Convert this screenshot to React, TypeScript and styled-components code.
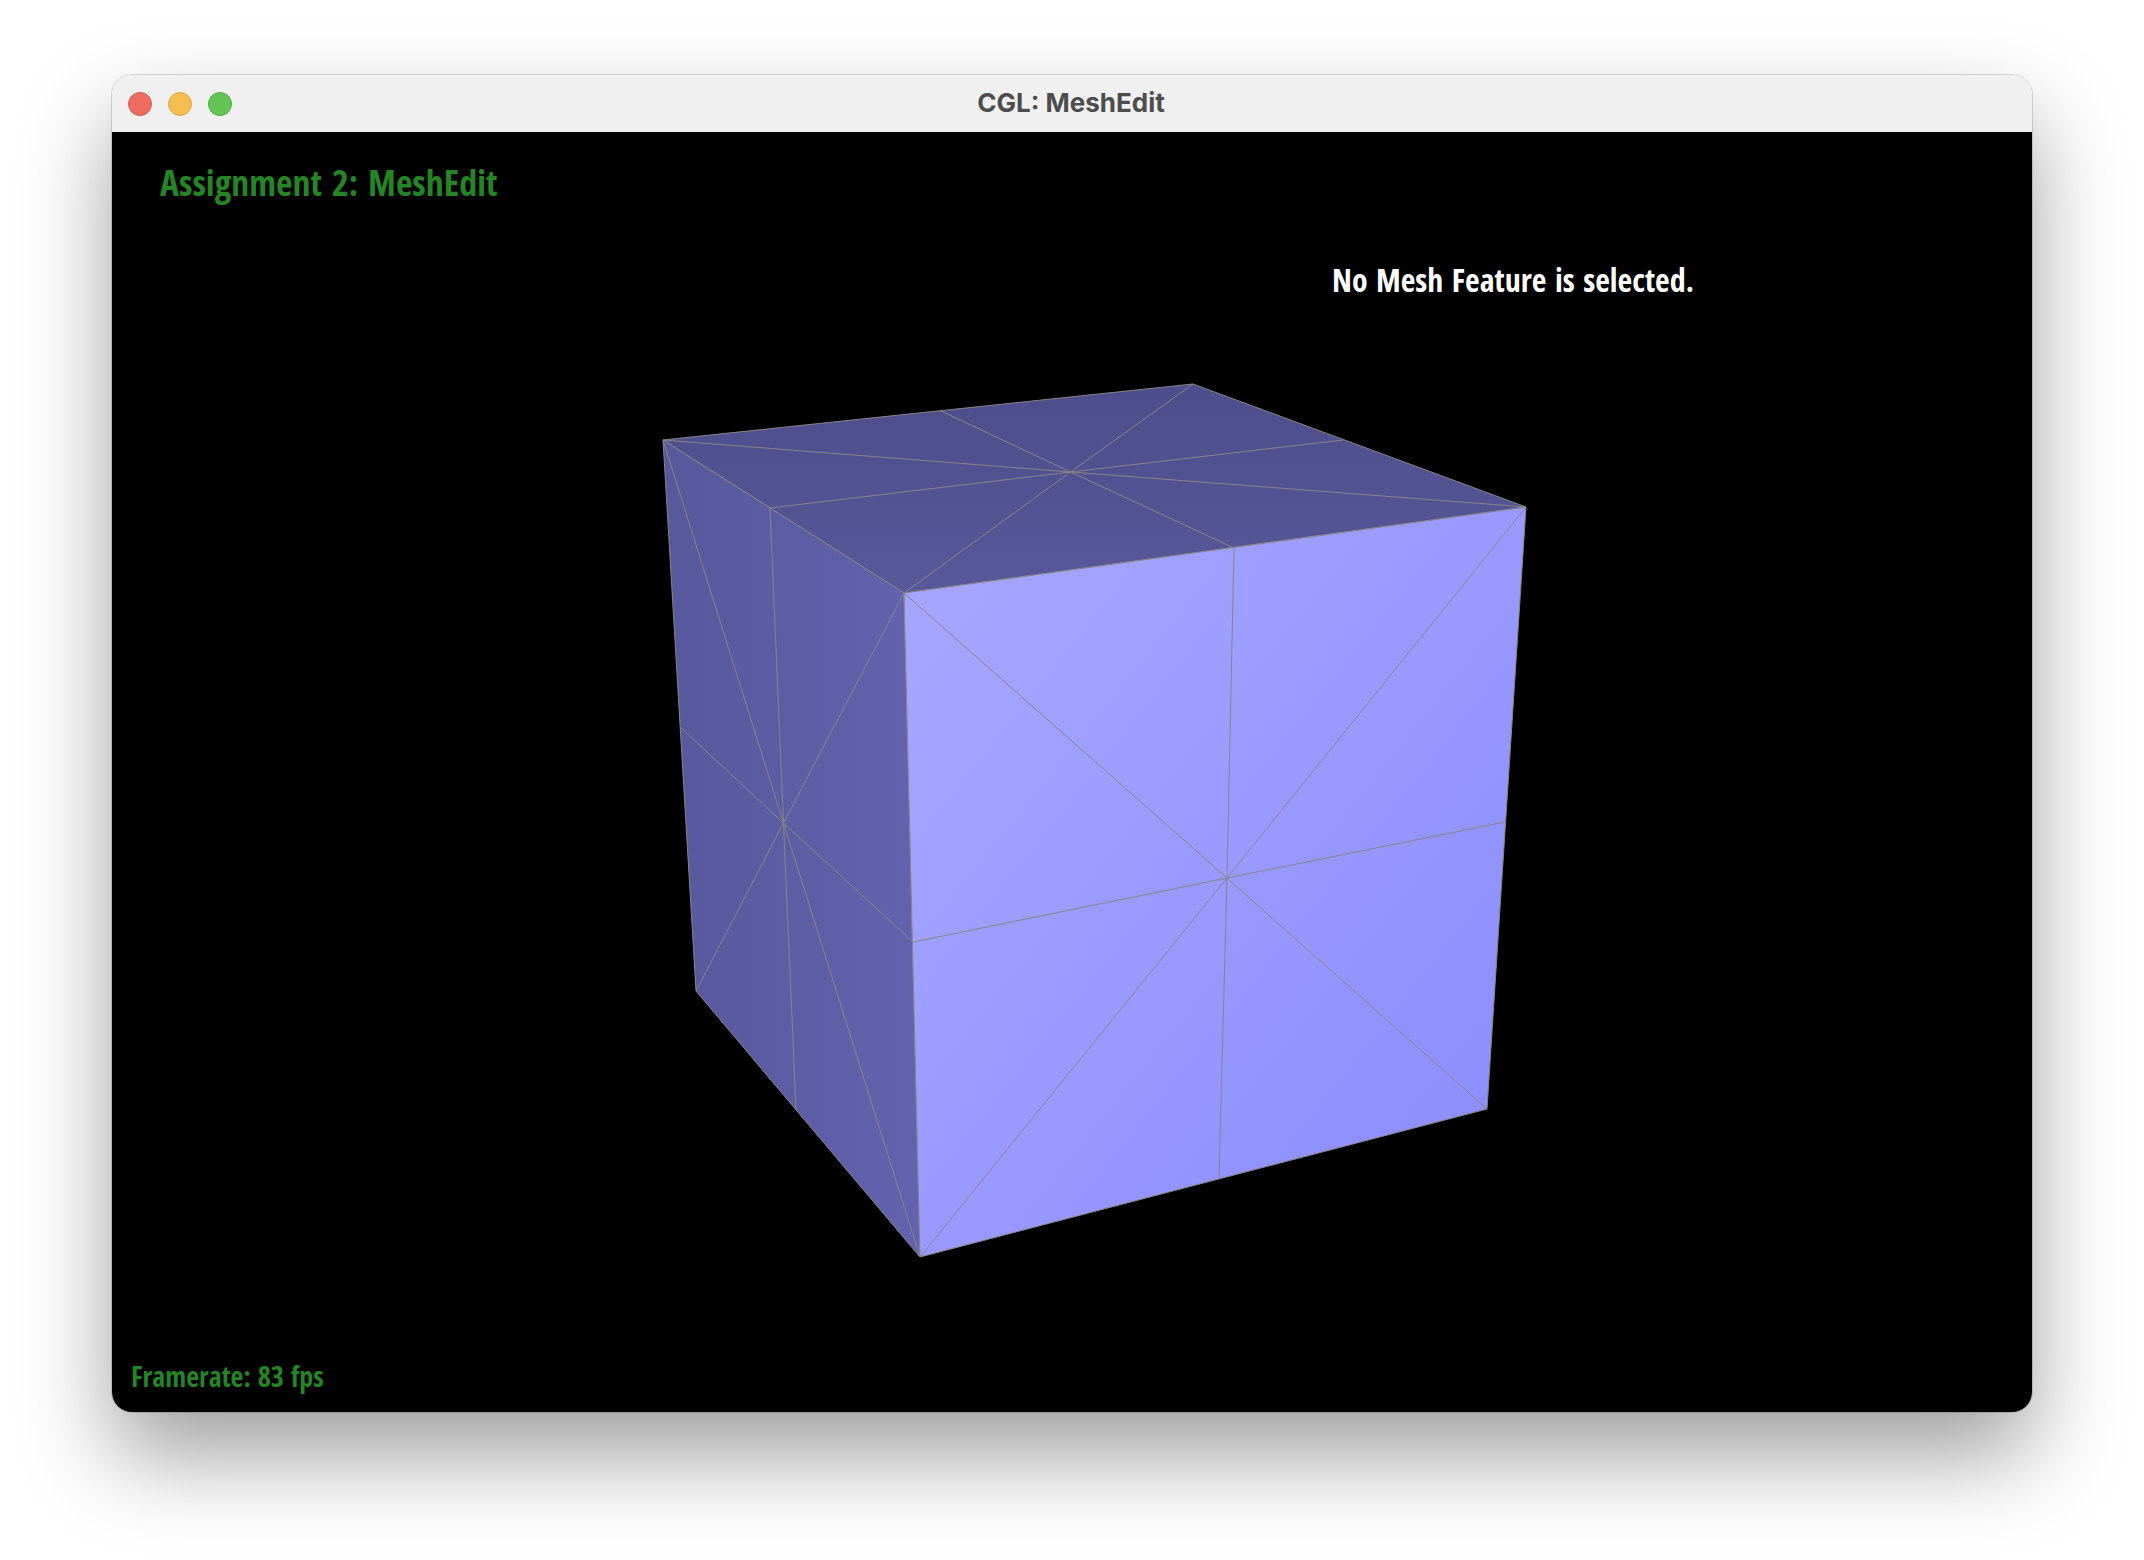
import styled, { createGlobalStyle } from "styled-components"

const GlobalStyle = createGlobalStyle`
    html, body {
        margin: 0;
        background: #ffffff;
    }
`

const Page = styled.div`
    width: 2144px;
    height: 1560px;
    box-sizing: border-box;
    padding: 75px 112px 0;
    overflow: hidden;
`

const Window = styled.div`
    width: 1920px;
    height: 1337px;
    display: flex;
    flex-direction: column;
    border-radius: 20px;
    overflow: hidden;
`

const WindowShadow = styled.div`
    border-radius: 20px;
    box-shadow: 0 44px 92px 0 rgba(0, 0, 0, 0.38), 0 0 0 1px rgba(0, 0, 0, 0.14);
`

const TitleBar = styled.div`
    height: 57px;
    flex: none;
    display: flex;
    align-items: center;
    position: relative;
    padding-left: 16px;
    gap: 16px;
    background: #f0f0f0;
`

const Light = styled.span<{ $fill: string; $edge: string }>`
    width: 24px;
    height: 24px;
    box-sizing: border-box;
    border-radius: 50%;
    background: ${p => p.$fill};
    border: 1px solid ${p => p.$edge};
`

const Title = styled.div`
    position: absolute;
    left: 0;
    right: 2px;
    top: 0;
    bottom: 2px;
    display: flex;
    align-items: center;
    justify-content: center;
    font-family: "Inter", "Liberation Sans", sans-serif;
    font-weight: 700;
    font-size: 26px;
    color: #4d4d4d;
`

const Viewport = styled.div`
    position: relative;
    height: 1280px;
    background: #000000;
`

const Cube = styled.svg`
    display: block;
`

const GlText = styled.div<{ $size: number; $color: string; $words: number }>`
    position: absolute;
    font-family: "Open Sans", "Noto Sans", sans-serif;
    font-stretch: condensed;
    font-weight: 700;
    font-size: ${p => p.$size}px;
    word-spacing: ${p => p.$words}px;
    line-height: 1;
    white-space: nowrap;
    color: ${p => p.$color};
`

const Heading = styled(GlText)`
    left: 48px;
    top: 33px;
`

const Selection = styled(GlText)`
    left: 1220px;
    top: 132px;
`

const Framerate = styled(GlText)`
    left: 19px;
    bottom: 22px;
`

type Pt = [number, number]

// window x = page x - 112, window y = page y - 132
const p = (x: number, y: number): Pt => [x - 112, y - 132]

const TBL = p(663, 440)
const APEX = p(1193, 384)
const TR = p(1526, 507)
const FTL = p(904, 593)
const LB = p(696, 991)
const BOT = p(920, 1257)
const BR = p(1487, 1109)

const faces: { fill: string; corners: Pt[]; rim: Pt[]; center: Pt }[] = [
    {
        fill: "url(#top)",
        corners: [TBL, APEX, TR, FTL],
        rim: [p(941, 411), p(1343, 440), p(1234, 548), p(770, 508)],
        center: p(1070.5, 472),
    },
    {
        fill: "url(#left)",
        corners: [TBL, FTL, BOT, LB],
        rim: [p(770, 508), p(913, 942), p(796, 1110), p(680, 727)],
        center: p(783.5, 823),
    },
    {
        fill: "url(#front)",
        corners: [FTL, TR, BR, BOT],
        rim: [p(1234, 548), p(1505, 822), p(1219, 1179), p(913, 942)],
        center: p(1227, 878),
    },
]

const MeshCube = () => (
    <Cube width="1920" height="1280" viewBox="0 0 1920 1280">
        <defs>
            <linearGradient id="top" gradientUnits="userSpaceOnUse" x1="800" y1="260" x2="800" y2="470">
                <stop offset="0" stopColor="#4e4e8c" />
                <stop offset="1" stopColor="#58589b" />
            </linearGradient>
            <linearGradient id="left" gradientUnits="userSpaceOnUse" x1="560" y1="0" x2="800" y2="0">
                <stop offset="0" stopColor="#58589d" />
                <stop offset="1" stopColor="#6262ae" />
            </linearGradient>
            <linearGradient id="front" gradientUnits="userSpaceOnUse" x1="800" y1="520" x2="1400" y2="1000">
                <stop offset="0" stopColor="#a5a5ff" />
                <stop offset="1" stopColor="#8d8dfd" />
            </linearGradient>
        </defs>
        {faces.map((face, i) => (
            <g key={i}>
                <polygon points={face.corners.map(c => c.join(",")).join(" ")} fill={face.fill} />
                {[...face.corners, ...face.rim].map((pt, j) => (
                    <line key={j} x1={pt[0]} y1={pt[1]} x2={face.center[0]} y2={face.center[1]} stroke="#868686" strokeWidth="1" />
                ))}
                <polygon points={face.corners.map(c => c.join(",")).join(" ")} fill="none" stroke="#868686" strokeWidth="1" />
            </g>
        ))}
    </Cube>
)

const App = () => (
    <>
        <GlobalStyle />
        <Page>
            <WindowShadow>
                <Window>
                    <TitleBar>
                        <Light $fill="#ef6b60" $edge="#dc5a50" />
                        <Light $fill="#f6be50" $edge="#dfa63c" />
                        <Light $fill="#62c554" $edge="#52ad45" />
                        <Title>CGL: MeshEdit</Title>
                    </TitleBar>
                    <Viewport>
                        <MeshCube />
                        <Heading $size={36} $color="#258425" $words={3.5}>Assignment 2: MeshEdit</Heading>
                        <Selection $size={32} $color="#ffffff" $words={2.75}>No Mesh Feature is selected.</Selection>
                        <Framerate $size={28} $color="#258425" $words={2}>Framerate: 83 fps</Framerate>
                    </Viewport>
                </Window>
            </WindowShadow>
        </Page>
    </>
)

export default App
